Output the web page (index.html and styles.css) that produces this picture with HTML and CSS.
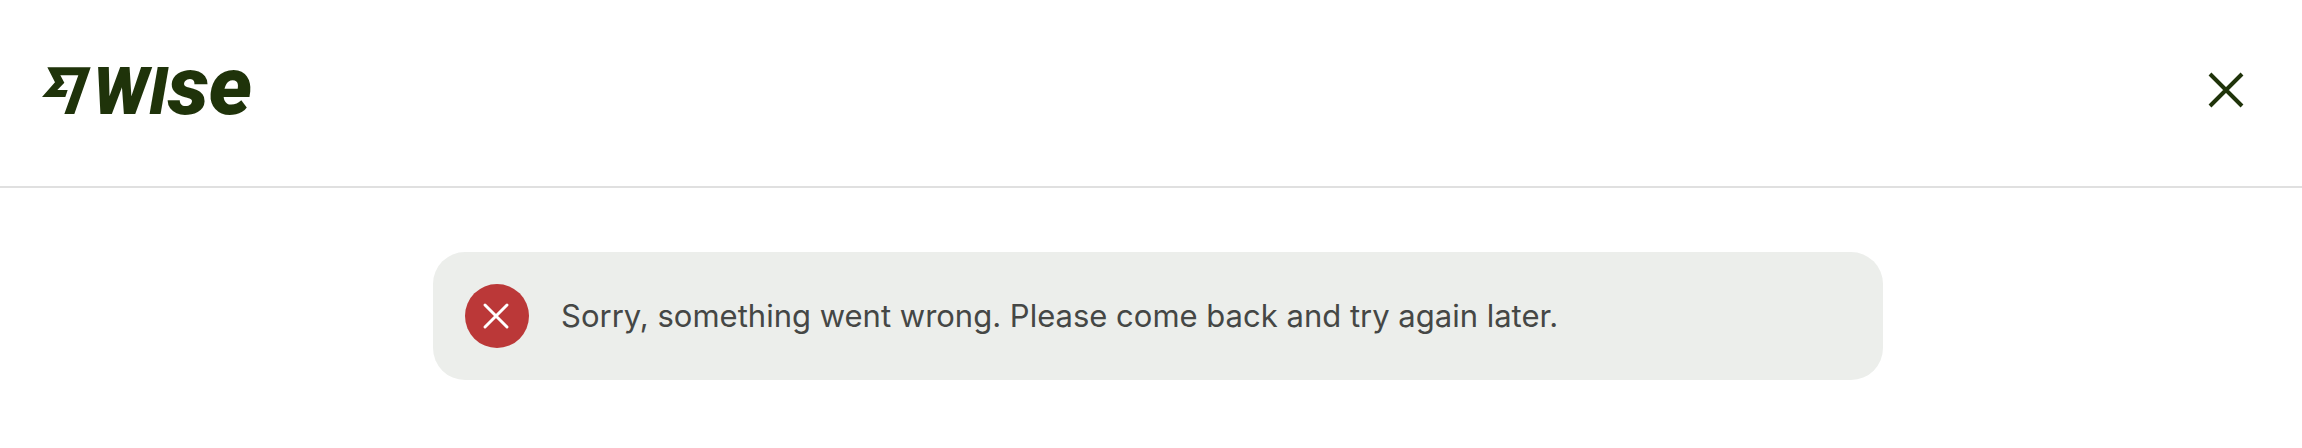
FILE: index.html
```html
<!DOCTYPE html>
<html lang="en">
<head>
<meta charset="utf-8">
<meta name="viewport" content="width=device-width, initial-scale=1">
<title>Wise</title>
<link rel="stylesheet" href="styles.css">
</head>
<body>
<header class="header">
  <a class="logo" href="#" aria-label="Wise">
    <svg class="logo-flag" viewBox="0 0 147 141" aria-hidden="true"><path d="M16 1H146L97 141H67L109 25H55L67 47L46 69H77L70 90H0L39 46Z"/></svg>
    <span class="logo-word"><span class="logo-caps">wi</span>se</span>
  </a>
  <button class="close" type="button" aria-label="Close">
    <svg viewBox="0 0 48 48" aria-hidden="true"><path d="M8 8L40 40M40 8L8 40"/></svg>
  </button>
</header>
<main class="content">
  <div class="alert" role="alert">
    <span class="alert-icon">
      <svg viewBox="0 0 64 64" aria-hidden="true"><path d="M20 21L42 43M42 21L20 43"/></svg>
    </span>
    <p class="alert-text">Sorry, something went wrong. Please come back and try again later.</p>
  </div>
</main>
</body>
</html>
```
FILE: styles.css
```css
* {
  box-sizing: border-box;
}

body {
  margin: 0;
  background: #fff;
  color: #454745;
  font-family: Inter, "Liberation Sans", sans-serif;
}

.header {
  display: flex;
  align-items: center;
  justify-content: space-between;
  padding: 66px 52px 72px 42px;
  border-bottom: 2px solid #e0e0e0;
}

.logo {
  display: flex;
  align-items: baseline;
  gap: 2px;
  color: #1f330a;
  text-decoration: none;
}

.logo-flag {
  width: 49px;
  height: 47px;
  fill: currentColor;
}

.logo-word {
  font: italic 900 82px/40px Roboto, "Liberation Sans", sans-serif;
}

.logo-caps {
  font-size: 66px;
  text-transform: uppercase;
}

.close {
  width: 48px;
  height: 48px;
  padding: 0;
  border: 0;
  background: none;
  color: #1f330a;
  cursor: pointer;
}

.close svg {
  display: block;
  fill: none;
  stroke: currentColor;
  stroke-width: 4;
}

.content {
  padding: 64px 32px 64px 46px;
}

.alert {
  display: flex;
  align-items: center;
  gap: 32px;
  max-width: 1450px;
  margin: 0 auto;
  padding: 32px;
  border-radius: 32px;
  background: #eceeeb;
}

.alert-icon {
  flex: none;
  width: 64px;
  height: 64px;
  border-radius: 50%;
  background: #bb3838;
}

.alert-icon svg {
  display: block;
  fill: none;
  stroke: #fff;
  stroke-width: 3;
  stroke-linecap: round;
}

.alert-text {
  margin: 0;
  font-size: 31px;
  line-height: 48px;
}
```
